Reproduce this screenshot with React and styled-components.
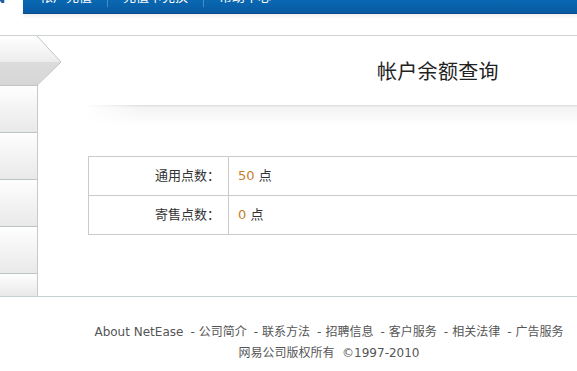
import React from 'react'
import styled, { createGlobalStyle } from 'styled-components'

const GlobalStyle = createGlobalStyle`
  html, body {
    margin: 0;
    padding: 0;
    background: #fff;
    overflow: hidden;
  }
  body {
    font-family: "DejaVu Sans", "Noto Sans CJK SC", sans-serif;
    font-size: 12px;
    color: #333;
  }
`

const navItems = ['帐户充值', '充值卡兑换', '帮助中心']

const balances = [
  { label: '通用点数：', value: 50 },
  { label: '寄售点数：', value: 0 }
]

const footerLinks = ['公司简介', '联系方法', '招聘信息', '客户服务', '相关法律', '广告服务']

export default function App() {
  return (
    <>
      <GlobalStyle />
      <Page>
        <TopBar>
          <LogoCorner>g</LogoCorner>
          <Nav>
            {navItems.map((item, index) => (
              <React.Fragment key={item}>
                {index > 0 && <NavSep />}
                <NavItem>{item}</NavItem>
              </React.Fragment>
            ))}
            <NavRight>退出</NavRight>
          </Nav>
        </TopBar>

        <Frame>
          <Sidebar>
            <ActiveTab>
              <svg width="62" height="50" viewBox="0 0 62 50">
                <defs>
                  <linearGradient id="tabTop" x1="0" y1="0" x2="0" y2="1">
                    <stop offset="0" stopColor="#ffffff" />
                    <stop offset="1" stopColor="#ececec" />
                  </linearGradient>
                  <linearGradient id="tabBottom" x1="0" y1="0" x2="0" y2="1">
                    <stop offset="0" stopColor="#dcdcdc" />
                    <stop offset="1" stopColor="#d6d6d6" />
                  </linearGradient>
                </defs>
                <polygon points="0,0 37,0 61,26 0,26" fill="url(#tabTop)" />
                <polygon points="0,26 61,26 37,49 0,49" fill="url(#tabBottom)" />
                <polyline
                  points="37,0 61,26 37,49.5 0,49.5"
                  fill="none"
                  stroke="#bfc4c6"
                  strokeWidth="1"
                />
              </svg>
            </ActiveTab>
            <SideItem />
            <SideItem />
            <SideItem />
            <SideItem />
            <SideItem $last />
          </Sidebar>

          <Main>
            <Title>帐户余额查询</Title>
            <Divider />
            <BalanceTable>
              <tbody>
                {balances.map(row => (
                  <tr key={row.label}>
                    <Label>{row.label}</Label>
                    <Value>
                      <Amount>{row.value}</Amount> 点
                    </Value>
                  </tr>
                ))}
              </tbody>
            </BalanceTable>
          </Main>
        </Frame>

        <Footer>
          <FooterLine>
            <FooterLink>About NetEase</FooterLink>
            {footerLinks.map(link => (
              <React.Fragment key={link}>
                <Dash>-</Dash>
                <FooterLink>{link}</FooterLink>
              </React.Fragment>
            ))}
          </FooterLine>
          <FooterLine>网易公司版权所有&nbsp;&nbsp;©1997-2010</FooterLine>
        </Footer>
      </Page>
    </>
  )
}

const Page = styled.div`
  width: 658px;
`

const TopBar = styled.div`
  display: flex;
  height: 35px;
`

const LogoCorner = styled.div`
  width: 23px;
  height: 8px;
  overflow: hidden;
  font: bold 16px "DejaVu Sans", sans-serif;
  line-height: 16px;
  color: #1c5d9c;
  text-indent: -6px;
  margin-top: -5px;
`

const Nav = styled.div`
  flex: 1;
  display: flex;
  align-items: flex-start;
  height: 13px;
  padding-left: 2px;
  overflow: hidden;
  background: linear-gradient(to bottom, #0a68b2, #075aa2);
  border-bottom: 1px solid #0a4c86;
  box-shadow: 0 2px 4px rgba(0, 0, 0, 0.07);
`

const NavItem = styled.div`
  padding: 0 15px;
  margin-top: -11px;
  font-family: "Noto Sans CJK SC", sans-serif;
  font-size: 13px;
  line-height: 13px;
  color: #fff;
  white-space: nowrap;
`

const NavSep = styled.div`
  width: 1px;
  height: 7px;
  background: #4c8cc6;
`

const NavRight = styled(NavItem)`
  margin-left: auto;
  margin-right: 14px;
  font-size: 12px;
  margin-top: -12px;
`

const Frame = styled.div`
  display: flex;
  height: 260px;
  border-top: 1px solid #cdd3d5;
  border-bottom: 1px solid #c8d0d3;
`

const Sidebar = styled.div`
  width: 37px;
  border-right: 1px solid #c3cbce;
  display: flex;
  flex-direction: column;
`

const ActiveTab = styled.div`
  position: relative;
  z-index: 1;
  width: 62px;
  height: 50px;
  flex-shrink: 0;
  svg {
    display: block;
  }
`

const SideItem = styled.div`
  height: ${p => (p.$last ? '22px' : '46px')};
  flex-shrink: 0;
  background: linear-gradient(to bottom, #fefefe, #e9e9e9);
  border-bottom: ${p => (p.$last ? 'none' : '1px solid #bcc4c7')};
`

const Main = styled.div`
  flex: 1;
  min-width: 0;
`

const Title = styled.div`
  padding: 25px 0 0 339px;
  font-family: "Noto Sans CJK SC", sans-serif;
  font-size: 20px;
  line-height: 20px;
  color: #222;
  letter-spacing: 0.3px;
`

const Divider = styled.div`
  margin: 24px 0 0 47px;
  height: 20px;
  background:
    linear-gradient(to right, #fff 0, rgba(255, 255, 255, 0) 55px),
    linear-gradient(to bottom, #e1e1e1 0, #e1e1e1 1px, #f3f3f3 2px, #fff 20px);
`

const BalanceTable = styled.table`
  margin: 31px 0 0 50px;
  width: 540px;
  border-collapse: collapse;
  border: 1px solid #cacaca;
  td {
    border: 1px solid #cacaca;
    height: 34px;
    padding: 0 0 4px;
    font-family: "DejaVu Sans", "Noto Sans CJK SC", sans-serif;
    font-size: 13px;
    color: #333;
  }
`

const Label = styled.td`
  width: 131px;
  padding-right: 8px !important;
  text-align: right;
`

const Value = styled.td`
  padding-left: 9px !important;
`

const Amount = styled.span`
  color: #c4812d;
`

const Footer = styled.div`
  padding-top: 25px;
`

const FooterLine = styled.div`
  display: flex;
  justify-content: center;
  align-items: baseline;
  line-height: 21px;
  font-size: 12px;
  color: #555;
  white-space: nowrap;
`

const FooterLink = styled.span`
  color: #555;
`

const Dash = styled.span`
  margin: 0 4px 0 7px;
`
